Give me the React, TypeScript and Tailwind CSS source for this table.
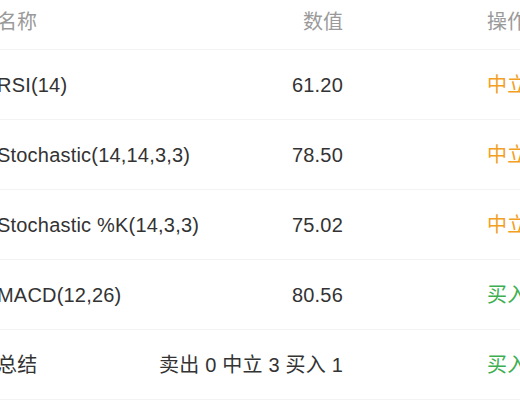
import React from 'react';

interface Row {
  name: string;
  value: string;
  action: string;
  tone: 'neutral' | 'buy';
}

const rows: Row[] = [
  { name: 'RSI(14)', value: '61.20', action: '中立', tone: 'neutral' },
  { name: 'Stochastic(14,14,3,3)', value: '78.50', action: '中立', tone: 'neutral' },
  { name: 'Stochastic %K(14,3,3)', value: '75.02', action: '中立', tone: 'neutral' },
  { name: 'MACD(12,26)', value: '80.56', action: '买入', tone: 'buy' },
  { name: '总结', value: '卖出 0 中立 3 买入 1', action: '买入', tone: 'buy' },
];

const toneClass = (tone: Row['tone']) => (tone === 'buy' ? 'text-[#3dae4f]' : 'text-[#f2a01f]');

const App: React.FC = () => {
  return (
    <div
      className="w-[520px] h-[400px] overflow-hidden bg-white"
      style={{ fontFamily: '"Liberation Sans", "Noto Sans CJK SC", sans-serif' }}
    >
      <div className="ml-[-3px] w-[600px]">
        <div className="grid grid-cols-[200px_146px_1fr] h-[50px] items-center pb-[6px] border-b border-[#f3f3f3] text-[20px] text-[#9a9a9a]">
          <span>名称</span>
          <span className="text-right">数值</span>
          <span className="pl-[144px]">操作</span>
        </div>
        {rows.map((row) => (
          <div
            key={row.name}
            className="grid grid-cols-[200px_146px_1fr] h-[70px] items-center border-b border-[#f3f3f3] text-[20px] text-[#333333] tracking-[0.2px]"
          >
            <span className="whitespace-nowrap">{row.name}</span>
            <span className="whitespace-nowrap flex justify-end">{row.value}</span>
            <span className={`pl-[144px] ${toneClass(row.tone)}`}>{row.action}</span>
          </div>
        ))}
      </div>
    </div>
  );
};

export default App;
